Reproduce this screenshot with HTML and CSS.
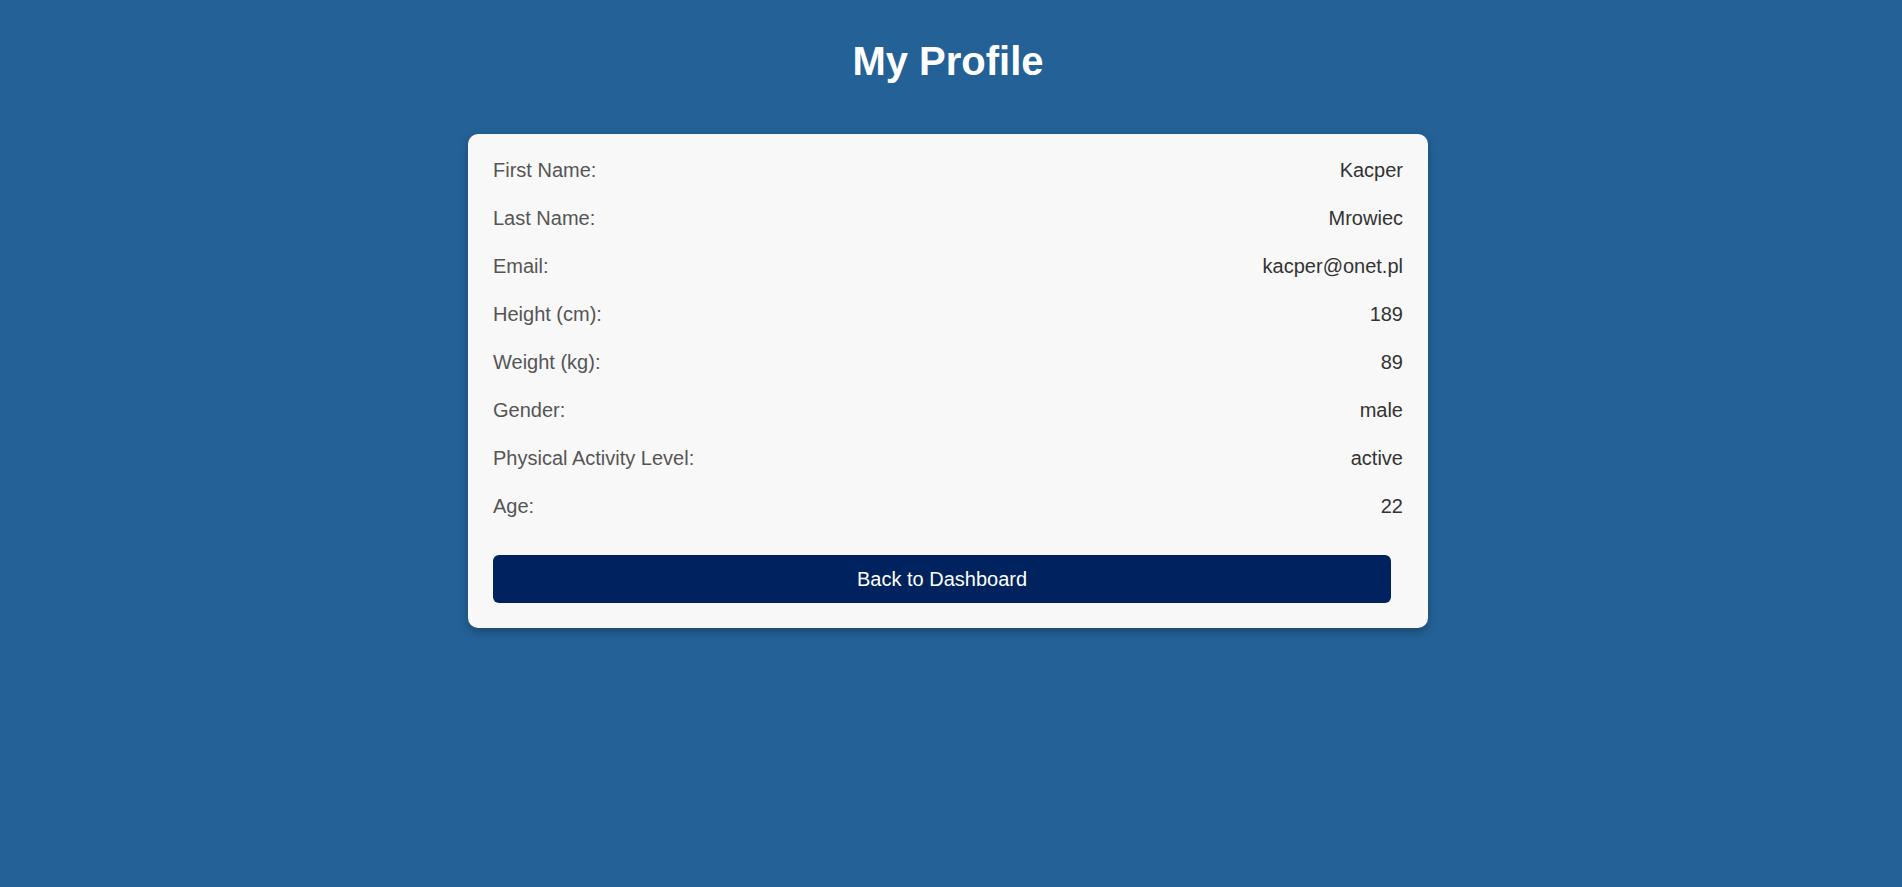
FILE: index.html
```html
<!DOCTYPE html>
<html lang="en">
<head>
<meta charset="utf-8">
<title>My Profile</title>
<link rel="stylesheet" href="styles.css">
</head>
<body>
<main class="page">
  <h1 class="title">My Profile</h1>
  <section class="card">
    <div class="row"><span class="label">First Name:</span><span class="value">Kacper</span></div>
    <div class="row"><span class="label">Last Name:</span><span class="value">Mrowiec</span></div>
    <div class="row"><span class="label">Email:</span><span class="value">kacper@onet.pl</span></div>
    <div class="row"><span class="label">Height (cm):</span><span class="value">189</span></div>
    <div class="row"><span class="label">Weight (kg):</span><span class="value">89</span></div>
    <div class="row"><span class="label">Gender:</span><span class="value">male</span></div>
    <div class="row"><span class="label">Physical Activity Level:</span><span class="value">active</span></div>
    <div class="row"><span class="label">Age:</span><span class="value">22</span></div>
    <button class="back-btn" type="button">Back to Dashboard</button>
  </section>
</main>
</body>
</html>
```

FILE: styles.css
```css
* { box-sizing: border-box; }
html, body { margin: 0; padding: 0; }
body {
  background: #236197;
  font-family: "Liberation Sans", Arial, sans-serif;
  min-height: 100vh;
}
.page {
  display: flex;
  flex-direction: column;
  align-items: center;
  padding-top: 38px;
  padding-right: 6px;
}
.title {
  margin: 0 0 50px;
  font-size: 40px;
  font-weight: bold;
  color: #ffffff;
  line-height: 46px;
}
.card {
  width: 960px;
  background: #f8f8f8;
  border-radius: 10px;
  box-shadow: 0 4px 10px rgba(0, 0, 0, 0.25);
  padding: 25px;
  display: flex;
  flex-direction: column;
  gap: 25px;
}
.row {
  display: flex;
  justify-content: space-between;
  font-size: 20px;
  line-height: 23px;
}
.label { color: #555555; }
.value { color: #333333; }
.back-btn {
  margin-top: 12px;
  width: 898px;
  height: 48px;
  border: none;
  border-radius: 6px;
  background: #00225e;
  color: #ffffff;
  font-family: "Liberation Sans", Arial, sans-serif;
  font-size: 20px;
  cursor: pointer;
}
```
